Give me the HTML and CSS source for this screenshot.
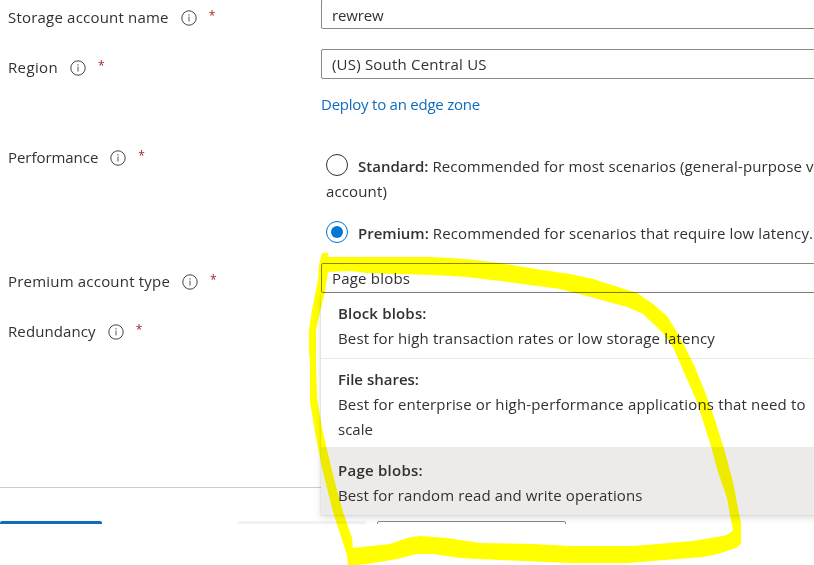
FILE: index.html
```html
<!DOCTYPE html>
<html lang="en">
<head>
<meta charset="utf-8">
<title>Create a storage account</title>
<link rel="stylesheet" href="styles.css">
</head>
<body>
<svg width="0" height="0" class="defs">
  <symbol id="info" viewBox="0 0 16 16">
    <circle cx="8" cy="8" r="7.2" fill="none" stroke="#444" stroke-width="1"/>
    <path d="M8 6.6V11.5" stroke="#555" stroke-width="1"/>
    <rect x="7.4" y="4.3" width="1.2" height="1.2" fill="#555"/>
  </symbol>
</svg>
<main class="page">
  <div class="row name-row">
    <div class="label"><span class="t-name">Storage account name</span><svg class="info"><use href="#info"/></svg><span class="req">*</span></div>
    <div class="control"><div class="input"><span class="t-rew">rewrew</span></div></div>
  </div>
  <div class="row region-row">
    <div class="label"><span class="t-region">Region</span><svg class="info"><use href="#info"/></svg><span class="req">*</span></div>
    <div class="control">
      <div class="input"><span class="t-us">(US) South Central US</span></div>
      <a class="link"><span class="t-link">Deploy to an edge zone</span></a>
    </div>
  </div>
  <div class="row perf-row">
    <div class="label"><span class="t-perf">Performance</span><svg class="info"><use href="#info"/></svg><span class="req">*</span></div>
    <div class="control options">
      <div class="option"><i class="radio"></i><b class="t-std">Standard:</b><span class="t-stdd">Recommended for most scenarios (general-purpose v2</span></div>
      <div class="wrapped">account)</div>
      <div class="option premium"><i class="radio on"></i><b class="t-prem">Premium:</b><span class="t-premd">Recommended for scenarios that require low latency.</span></div>
    </div>
  </div>
  <div class="row type-row">
    <div class="label"><span class="t-type">Premium account type</span><svg class="info"><use href="#info"/></svg><span class="req">*</span></div>
    <div class="control">
      <div class="input"><span class="t-page">Page blobs</span></div>
      <div class="menu">
        <div class="item"><b class="t-bb">Block blobs:</b><p><span class="t-bbd">Best for high transaction rates or low storage latency</span></p></div>
        <div class="item files"><b class="t-fs">File shares:</b><p><span class="t-fsd">Best for enterprise or high-performance applications that need to</span><br>scale</p></div>
        <div class="item selected"><b class="t-pb">Page blobs:</b><p><span class="t-pbd">Best for random read and write operations</span></p></div>
      </div>
    </div>
  </div>
  <div class="row redundancy-row">
    <div class="label"><span class="t-red">Redundancy</span><svg class="info"><use href="#info"/></svg><span class="req">*</span></div>
  </div>
  <footer class="footer"><div class="btn primary"></div><div class="btn disabled"></div><div class="btn outline"></div></footer>
</main>
<svg class="marker" viewBox="0 0 814 565">
  <path fill="#ff0" fill-rule="evenodd" d="M322 253H328V257H433L465 259L500 263L535 269L570 274L593 279L637 293L653 304L667 316L675 329L685 347L694 365L705 392L715 420L725 452L733 482L738 508L741 523V543Q739 547 733 549Q720 554 703 557L665 560L627 563H570L500 560L460 558L433 554H417L397 559L367 564L348 566L347 555L333 512L322 468L315 432L310 402V365L309 353V330L312 310L318 280L319 265Z
  M328 272L326 285L325 292L320 312L316 330V365L317 398L322 428L333 475L343 512L352 538L353 548L390 544L407 538L420 536L447 538L480 543L533 544L570 546H633L693 541L723 536Q730 534 733 530L730 515L727 498L718 472L710 443L697 402L683 370L673 347L663 333L645 316L643 314L627 307L583 295L560 289L530 285L500 281L467 277L433 275L367 273L350 271Z"/>
</svg>
</body>
</html>
```
FILE: styles.css
```css
* { box-sizing: border-box; }
body { margin: 0; background: #fff; color: #323130; font: 15px/25px "Open Sans", "Noto Sans", sans-serif; overflow: hidden; }
.defs { position: absolute; }
.page { width: 814px; height: 565px; overflow: hidden; display: flex; flex-direction: column; }
.row { display: grid; grid-template-columns: 313px 1fr; padding-left: 8px; flex: none; }
.label { display: flex; align-items: center; height: 25px; white-space: nowrap; }
.label span, .input span, .t-link, .option span, .option b, .item b, .item p span { white-space: nowrap; }
.t-name, .t-type, .t-us, .t-page { letter-spacing: .2px; }
.t-region { letter-spacing: .35px; }
.t-perf { letter-spacing: -.05px; }
.t-red { letter-spacing: .1px; }
.t-rew { letter-spacing: -.15px; }
.t-link { letter-spacing: -.24px; }
.t-stdd, .t-premd, .wrapped { letter-spacing: .13px; }
.t-bb { letter-spacing: .17px; }
.t-pb { letter-spacing: .25px; }
.t-bbd, .t-fsd { letter-spacing: .155px; }
.t-pbd { letter-spacing: .12px; }
.info { width: 16px; height: 16px; margin: 0 12px; flex: none; }
.req { color: #a4262c; font-size: 12px; line-height: 22px; padding-bottom: 3px; }
.input { height: 30px; width: 520px; border: 1px solid #8a8886; border-radius: 2px; padding: 0 10px; line-height: 29px; }
.name-row { height: 49px; padding-top: 5px; }
.name-row .input { margin-top: -6px; line-height: 30px; }
.region-row { height: 96px; }
.region-row .label { margin-top: 6px; }
.link { display: block; color: #0f6cbd; margin-top: 13px; }
.perf-row { height: 118px; }
.options { padding-left: 5px; padding-top: 9px; }
.option { display: flex; align-items: center; height: 25px; width: 520px; }
.option b { margin-right: 4px; }
b { font-weight: 600; }
.premium { margin-top: 17px; }
.radio { width: 22px; height: 22px; margin: -3px 10px 0 0; border: 1px solid #323130; border-radius: 50%; flex: none; display: grid; place-items: center; }
.radio.on { border-color: #0078d4; }
.radio.on::after { content: ""; width: 12px; height: 12px; border-radius: 50%; background: #0078d4; }
.type-row { height: 50px; }
.type-row .label { margin-top: 6px; }
.type-row .control { position: relative; }
.menu { position: absolute; top: 30px; left: 0; width: 520px; background: #fff; box-shadow: 0 3px 7px rgba(0,0,0,.13), 0 0 2px rgba(0,0,0,.15); }
.item { padding: 8px 17px 7px; height: 66px; border-bottom: 1px solid #edebe9; }
.item b { display: block; }
.item p { margin: 0; }
.files { height: 89px; }
.selected { height: 67px; padding-top: 10px; background: #edebe9; }
.redundancy-row { height: 174px; padding-top: 6px; }
.footer { border-top: 1px solid #ccc; height: 37px; padding-top: 33px; display: flex; overflow: hidden; flex: none; }
.btn { height: 30px; flex: none; border-radius: 2px; }
.primary { width: 102px; background: #0f6cbd; }
.disabled { width: 128px; margin-left: 136px; background: #f3f2f1; }
.outline { width: 189px; margin-left: 11px; border: 1px solid #8a8886; }
.marker { position: absolute; left: 0; top: 0; width: 814px; height: 565px; mix-blend-mode: multiply; }
```
